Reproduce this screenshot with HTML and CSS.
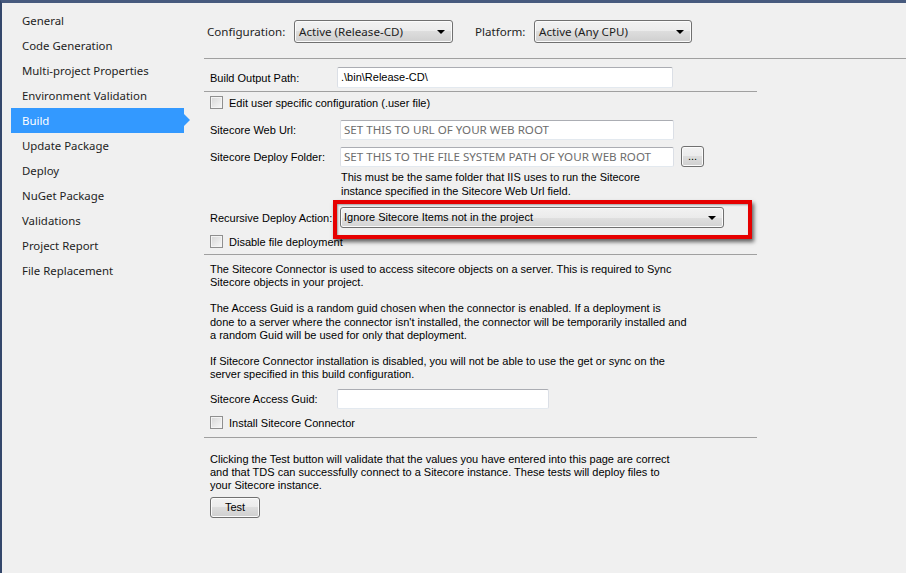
FILE: index.html
```html
<!DOCTYPE html>
<html lang="en">
<head>
    <meta charset="UTF-8">
    <title>Build Properties</title>
    <link rel="stylesheet" href="styles.css">
</head>
<body>
    <div class="window">
        <nav class="sidebar">
            <div class="nav-item">General</div>
            <div class="nav-item">Code Generation</div>
            <div class="nav-item">Multi-project Properties</div>
            <div class="nav-item">Environment Validation</div>
            <div class="nav-item active">Build</div>
            <div class="nav-item">Update Package</div>
            <div class="nav-item">Deploy</div>
            <div class="nav-item">NuGet Package</div>
            <div class="nav-item">Validations</div>
            <div class="nav-item">Project Report</div>
            <div class="nav-item">File Replacement</div>
        </nav>

        <main class="panel">
            <div class="config-bar">
                <span class="config-label">Configuration:</span>
                <div class="combo combo-config"><span>Active (Release-CD)</span></div>
                <span class="platform-label">Platform:</span>
                <div class="combo combo-platform"><span>Active (Any CPU)</span></div>
            </div>
            <div class="rule rule-full"></div>

            <div class="form">
                <div class="field field-output">
                    <span class="field-label w127">Build Output Path:</span>
                    <div class="textbox tb-output">.\bin\Release-CD\</div>
                </div>
                <div class="rule rule-short rule-a"></div>

                <div class="check check-user"><span class="box"></span>Edit user specific configuration (.user file)</div>

                <div class="field field-url">
                    <span class="field-label w130">Sitecore Web Url:</span>
                    <div class="textbox tb-wide hint">SET THIS TO URL OF YOUR WEB ROOT</div>
                </div>
                <div class="field field-folder">
                    <span class="field-label w130">Sitecore Deploy Folder:</span>
                    <div class="textbox tb-wide hint">SET THIS TO THE FILE SYSTEM PATH OF YOUR WEB ROOT</div>
                    <div class="button btn-browse">...</div>
                </div>
                <p class="help">This must be the same folder that IIS uses to run the Sitecore<br>instance specified in the Sitecore Web Url field.</p>

                <div class="field field-recursive">
                    <span class="field-label w130">Recursive Deploy Action:</span>
                    <div class="combo combo-recursive"><span>Ignore Sitecore Items not in the project</span></div>
                    <div class="callout"></div>
                </div>

                <div class="check check-disable"><span class="box"></span>Disable file deployment</div>
                <div class="rule rule-short rule-b"></div>

                <div class="text text-connector">
                    <p>The Sitecore Connector is used to access sitecore objects on a server. This is required to Sync<br>Sitecore objects in your project.</p>
                    <p>The Access Guid is a random guid chosen when the connector is enabled. If a deployment is<br>done to a server where the connector isn't installed, the connector will be temporarily installed and<br>a random Guid will be used for only that deployment.</p>
                    <p>If Sitecore Connector installation is disabled, you will not be able to use the get or sync on the<br>server specified in this build configuration.</p>
                </div>

                <div class="field field-guid">
                    <span class="field-label w127">Sitecore Access Guid:</span>
                    <div class="textbox tb-guid"></div>
                </div>

                <div class="check check-install"><span class="box"></span>Install Sitecore Connector</div>
                <div class="rule rule-short rule-c"></div>

                <div class="text text-test">
                    <p>Clicking the Test button will validate that the values you have entered into this page are correct<br>and that TDS can successfully connect to a Sitecore instance. These tests will deploy files to<br>your Sitecore instance.</p>
                </div>

                <div class="button btn-test">Test</div>
            </div>
        </main>
    </div>
</body>
</html>
```

FILE: styles.css
```css
html, body {
    margin: 0;
    height: 100%;
}

body {
    box-sizing: border-box;
    background: #f0f0f0;
    border-top: 3px solid #475a7e;
    border-left: 2px solid #34476b;
    font-family: 'Liberation Sans', Arial, sans-serif;
    font-size: 11px;
    color: #000;
    overflow: hidden;
}

.window {
    display: flex;
    height: 100%;
}

/* left navigation */
.sidebar {
    width: 196px;
    flex-shrink: 0;
    padding-top: 5px;
    font-family: 'Noto Sans', sans-serif;
    font-size: 11.4px;
    color: #1e1e1e;
}

.nav-item {
    height: 25px;
    line-height: 25px;
    padding-left: 20px;
    white-space: nowrap;
}

.nav-item.active {
    position: relative;
    box-sizing: border-box;
    width: 173px;
    margin-left: 9px;
    padding-left: 11px;
    background: #3399ff;
    color: #fff;
}

.nav-item.active::after {
    content: '';
    position: absolute;
    right: -6px;
    top: 6px;
    border-left: 6px solid #3399ff;
    border-top: 6px solid transparent;
    border-bottom: 6px solid transparent;
}

/* right panel */
.panel {
    flex: 1;
}

.config-bar {
    display: flex;
    align-items: flex-start;
    height: 38px;
    padding: 17px 0 0 9px;
    font-family: 'Noto Sans', sans-serif;
    font-size: 11.6px;
    color: #1e1e1e;
}

.config-label {
    width: 87px;
    line-height: 23px;
}

.platform-label {
    width: 59px;
    margin-left: 22px;
    line-height: 23px;
}

.combo {
    position: relative;
    box-sizing: border-box;
    border: 1px solid #707070;
    border-radius: 3px;
    background: linear-gradient(#f2f2f2 0%, #ebebeb 50%, #dddddd 50%, #cfcfcf 100%);
    box-shadow: inset 0 0 0 1px #fbfbfb;
    padding-left: 4px;
    white-space: nowrap;
}

.combo::after {
    content: '';
    position: absolute;
    right: 7px;
    top: 50%;
    margin-top: -2px;
    border-top: 4px solid #000;
    border-left: 4px solid transparent;
    border-right: 4px solid transparent;
}

.combo-config {
    width: 159px;
    height: 23px;
    line-height: 21px;
}

.combo-platform {
    width: 158px;
    height: 23px;
    line-height: 21px;
}

.combo-recursive {
    width: 384px;
    height: 21px;
    line-height: 19px;
    padding-left: 3px;
    background: linear-gradient(#f2f2f2 0%, #ebebeb 50%, #e0e0e0 50%, #d3d3d3 100%);
}

.rule {
    height: 1px;
    background: #a0a0a0;
}

.rule-full {
    margin-left: 6px;
}

.form {
    padding-left: 12px;
}

.rule-short {
    width: 553px;
    margin-left: -6px;
}

.field {
    display: flex;
    align-items: center;
}

.field-label {
    flex-shrink: 0;
    white-space: nowrap;
}

.w127 { width: 127px; }
.w130 { width: 130px; }

.textbox {
    box-sizing: border-box;
    background: #fff;
    border: 1px solid #dbdfe6;
    border-top-color: #abadb3;
    border-bottom-color: #e3e9ef;
    border-radius: 2px;
    padding-left: 3px;
    white-space: nowrap;
    overflow: hidden;
}

.hint {
    font-family: 'Noto Sans', sans-serif;
    font-size: 11.6px;
    color: #6d6d6d;
    line-height: 18px;
}

.field-output { margin-top: 8px; }
.tb-output { width: 336px; height: 21px; line-height: 19px; }

.rule-a { margin-top: 3px; }

.check {
    display: flex;
    align-items: center;
    height: 13px;
    white-space: nowrap;
}

.box {
    box-sizing: border-box;
    width: 13px;
    height: 13px;
    margin-right: 6px;
    border: 1px solid #8f8f8f;
    background: linear-gradient(135deg, #d6d6d6, #f8f8f8);
    box-shadow: inset 0 0 0 1px #f4f4f4;
}

.check-user { margin-top: 4px; }

.field-url { margin-top: 11px; }
.field-folder { margin-top: 6px; }
.tb-wide { width: 334px; height: 20px; }

.button {
    box-sizing: border-box;
    border: 1px solid #707070;
    border-radius: 3px;
    background: linear-gradient(#f2f2f2 0%, #ebebeb 50%, #dddddd 50%, #cfcfcf 100%);
    box-shadow: inset 0 0 0 1px #fbfbfb;
    text-align: center;
}

.btn-browse {
    width: 23px;
    height: 21px;
    margin-left: 7px;
    line-height: 19px;
}

.help {
    margin: 4px 0 0 131px;
    line-height: 13.5px;
    white-space: nowrap;
}

.field-recursive {
    position: relative;
    margin-top: 9px;
}

.callout {
    position: absolute;
    left: 123px;
    top: -7px;
    width: 419px;
    height: 39px;
    box-sizing: border-box;
    border: 4px solid #e60000;
    box-shadow: 2px 3px 4px rgba(0, 0, 0, 0.6), inset 1px 1px 2px rgba(0, 0, 0, 0.35);
    pointer-events: none;
}

.check-disable { margin-top: 7px; }
.rule-b { margin-top: 6px; }

.text {
    line-height: 13.125px;
    white-space: nowrap;
}

.text p {
    margin: 0 0 13.125px;
}

.text p:last-child {
    margin-bottom: 0;
}

.text-connector { margin-top: 8px; }

.field-guid { margin-top: 8px; }
.tb-guid { width: 212px; height: 20px; }

.check-install { margin-top: 7px; }
.rule-c { margin-top: 8px; }

.text-test { margin-top: 15px; }

.btn-test {
    width: 50px;
    height: 21px;
    margin-top: 4px;
    line-height: 19px;
}
```
